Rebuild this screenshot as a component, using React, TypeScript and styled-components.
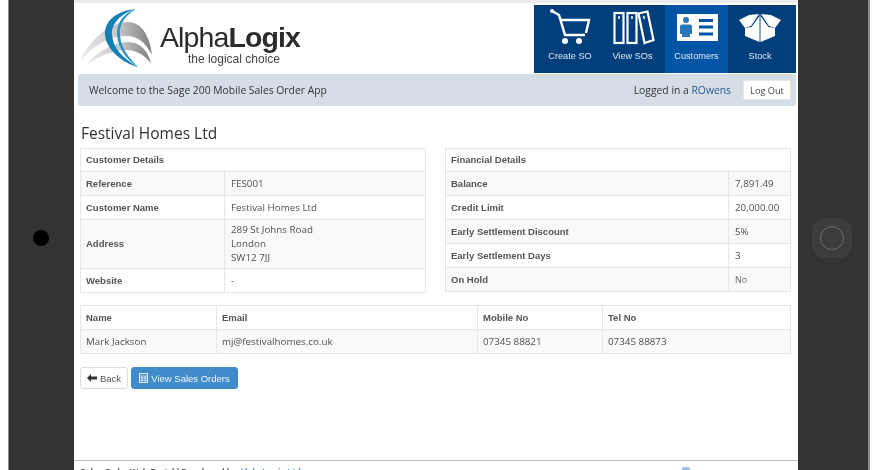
import styled, { createGlobalStyle } from 'styled-components';

const GlobalStyle = createGlobalStyle`
  html, body {
    margin: 0;
    padding: 0;
    background: #ffffff;
    overflow: hidden;
  }
`;

const Device = styled.div`
  display: flex;
  width: 876px;
  height: 470px;
  overflow: hidden;
  filter: blur(0.35px);
  font-family: 'Open Sans', 'Noto Sans', sans-serif;
  color: #444;
`;

const Bezel = styled.div<{ $side: 'left' | 'right' }>`
  box-sizing: border-box;
  display: flex;
  align-items: center;
  flex-shrink: 0;
  padding-top: 6px;
  background: #333333;
  ${({ $side }) =>
    $side === 'left'
      ? `width: 66px; margin-left: 8px; border-left: 1px solid #8c8c8c; padding-left: 24px;`
      : `width: 72px; border-right: 2px solid #8c8c8c; padding-left: 14px;`}
`;

const Camera = styled.span`
  width: 16px;
  height: 16px;
  border-radius: 50%;
  background: #000;
`;

const HomeButton = styled.span`
  display: flex;
  align-items: center;
  justify-content: center;
  width: 40px;
  height: 40px;
  border-radius: 13px;
  background: #3c3c3c;
`;

const HomeRing = styled.span`
  box-sizing: border-box;
  width: 24px;
  height: 24px;
  border-radius: 50%;
  border: 1.5px solid #6a6a6a;
`;

const Screen = styled.div`
  display: flex;
  flex-direction: column;
  width: 724px;
  flex-shrink: 0;
  background: #fff;
  border-top: 3px solid #ececec;
  box-sizing: border-box;
`;

const Header = styled.header`
  display: flex;
  justify-content: space-between;
  height: 69px;
  padding: 2px 2px 0 4px;
`;

const Brand = styled.div`
  display: flex;
  align-items: flex-start;
  gap: 6px;
`;

const BrandText = styled.div`
  display: flex;
  flex-direction: column;
  align-items: center;
  padding-top: 16px;
  font-family: 'Liberation Sans', Arial, sans-serif;
  color: #2c2c2c;
`;

const BrandName = styled.div`
  font-size: 28.5px;
  line-height: 32px;
  letter-spacing: -0.9px;

  b {
    font-weight: 700;
  }
`;

const Tagline = styled.div`
  font-size: 12px;
  line-height: 14px;
  margin: -1px 0 0 8px;
  color: #444;
`;

const Nav = styled.nav`
  display: flex;
  height: 68px;
  background: #013f7c;
`;

const NavItem = styled.div<{ $active?: boolean; $width: number; $pad?: string }>`
  display: flex;
  flex-direction: column;
  align-items: center;
  width: ${({ $width }) => $width}px;
  padding: 4px ${({ $pad }) => $pad || '0 0 0'};
  box-sizing: border-box;
  background: ${({ $active }) => ($active ? '#0255a5' : 'transparent')};
  font-family: 'Liberation Sans', Arial, sans-serif;
  font-size: 9.2px;
  color: #dce6f0;

  svg {
    display: block;
    height: 40px;
  }

  span {
    margin-top: 1px;
    line-height: 12px;
  }
`;

const WelcomeBar = styled.div`
  display: flex;
  align-items: center;
  justify-content: space-between;
  height: 32px;
  margin: 0 2px 0 4px;
  padding: 0 5px 0 11px;
  background: #d5dee6;
  border-radius: 3px;
  font-size: 10.35px;
  color: #333;
`;

const LoggedIn = styled.div`
  display: flex;
  align-items: center;
  gap: 12px;
`;

const UserLink = styled.span`
  color: #2a5a8c;
`;

const LogOut = styled.button`
  height: 20px;
  width: 48px;
  padding: 0;
  background: #fff;
  border: 1px solid #e8e8e8;
  border-radius: 2px;
  font-family: inherit;
  font-size: 9.2px;
  color: #444;
`;

const Content = styled.main`
  flex: 1;
  padding: 0 7px 0 6px;
`;

const Title = styled.h1`
  margin: 17px 0 5px 1px;
  font-size: 15.5px;
  line-height: 20px;
  font-weight: 400;
  color: #333;
`;

const TwoCols = styled.div`
  display: flex;
  align-items: flex-start;
  justify-content: space-between;
`;

const Table = styled.table<{ $width: number }>`
  width: ${({ $width }) => $width}px;
  table-layout: fixed;
  border-collapse: collapse;
  font-size: 9.8px;
  color: #505050;
`;

const Row = styled.tr<{ $striped?: boolean }>`
  background: ${({ $striped }) => ($striped ? '#f9f9f9' : '#fff')};
`;

const Cell = styled.td<{ $height?: number }>`
  height: ${({ $height }) => $height || 24}px;
  padding: 0 5px 0 6px;
  border: 1px solid #e6e6e6;
  box-sizing: border-box;
  line-height: 14px;
`;

const Label = styled(Cell).attrs({ as: 'th' })`
  padding-left: 5px;
  font-family: 'Liberation Sans', Arial, sans-serif;
  font-size: 9.5px;
  font-weight: 700;
  text-align: left;
  color: #555;
`;

const Small = styled.span`
  font-size: 9px;
  color: #666;
`;

const ContactTable = styled(Table)`
  margin-top: 12px;

  td {
    padding-left: 5px;
  }
`;

const Actions = styled.div`
  display: flex;
  gap: 3px;
  margin-top: 13px;
`;

const Button = styled.button<{ $primary?: boolean }>`
  display: flex;
  align-items: center;
  justify-content: center;
  gap: 3px;
  height: 22px;
  padding: 0;
  width: ${({ $primary }) => ($primary ? 107 : 48)}px;
  border-radius: 3px;
  border: 1px solid ${({ $primary }) => ($primary ? '#3f8acb' : '#dcdcdc')};
  background: ${({ $primary }) => ($primary ? '#428bca' : '#fff')};
  color: ${({ $primary }) => ($primary ? '#eef5fb' : '#555')};
  font-family: 'Liberation Sans', Arial, sans-serif;
  font-size: 9.5px;
`;

const Footer = styled.footer`
  flex-shrink: 0;
  display: flex;
  justify-content: space-between;
  height: 3px;
  padding: 6px 108px 0 6px;
  overflow: hidden;
  border-top: 1px solid #bdbdbd;
  font-family: 'Liberation Sans', Arial, sans-serif;
  font-size: 8.500px;
  line-height: 10px;
  font-weight: 700;
  color: #555;

  span span {
    color: #428bca;
  }
`;

const FooterMark = styled.i`
  width: 8px;
  height: 8px;
  background: #9cc4e4;
  border-radius: 2px;
`;

function Logo() {
  return (
    <svg width="76" height="66" viewBox="0 0 76 66">
      <defs>
        <linearGradient id="arc" x1="0" x2="1" y1="0" y2="0">
          <stop offset="0" stopColor="#ececec" />
          <stop offset="0.55" stopColor="#c4c4c4" />
          <stop offset="1" stopColor="#7d7d7d" />
        </linearGradient>
      </defs>
      <path d="M2 56C12 34 32 17 50 17C64 17 72 32 74 50C68 38 60 31 48 31C30 31 14 42 2 56Z" fill="url(#arc)" />
      <path d="M8 60C20 46 36 37 50 37C62 37 70 46 73 58C66 50 58 45 48 45C34 45 20 52 8 60Z" fill="url(#arc)" />
      <path d="M58 4C36 6 26 18 27 30C28 44 44 58 60 62C46 54 35 44 34 30C33 18 44 8 58 4Z" fill="#1280b4" />
      <path d="M58 4C46 8 38 18 39 30C40 44 50 56 60 62C52 54 43 44 42 30C41 18 48 10 58 4Z" fill="#2b93c2" />
    </svg>
  );
}

function CartIcon() {
  return (
    <svg width="44" height="40" viewBox="0 0 44 40" fill="none" stroke="#fff">
      <path d="M4 2L11 6L17 26H37" strokeWidth="2.4" />
      <path d="M13 11H41L38 24" strokeWidth="2.4" />
      <circle cx="4" cy="2" r="2" fill="#fff" stroke="none" />
      <circle cx="17" cy="32" r="3" fill="#fff" stroke="none" />
      <circle cx="31" cy="32" r="3" fill="#fff" stroke="none" />
    </svg>
  );
}

function BindersIcon() {
  return (
    <svg width="44" height="40" viewBox="0 0 44 40" fill="none" stroke="#fff" strokeWidth="2.200">
      <rect x="3.500" y="4" width="9" height="30" />
      <rect x="16.500" y="4" width="9" height="30" />
      <path d="M27.500 4.500L36.500 2.500L42.500 31L33.500 34Z" />
      <path d="M8 7V10M21 7V10M32.500 7L33.500 10" strokeWidth="1.500" />
    </svg>
  );
}

function CustomerIcon() {
  return (
    <svg width="44" height="40" viewBox="0 0 44 40">
      <rect x="2" y="5" width="41" height="27" fill="#fff" />
      <circle cx="11" cy="11" r="3" fill="#2b78b8" />
      <path d="M5 17Q5 15.500 7 15.500H15Q17 15.500 17 17V25H15V28H7V25H5Z" fill="#2b78b8" />
      <path d="M24 11.600H38M24 18H38M24 25H38" stroke="#0255a5" strokeWidth="3" />
    </svg>
  );
}

function BoxIcon() {
  return (
    <svg width="44" height="40" viewBox="0 0 44 40">
      <path d="M1 11L11 6L21 5L13 17L7 19Z" fill="#fff" />
      <path d="M43 11L33 6L23 5L31 17L37 19Z" fill="#fff" />
      <path d="M7 19L13.500 18L21.500 7V33L7 27Z" fill="#fff" />
      <path d="M37 19L30.500 18L22.500 7V33L37 27Z" fill="#fff" />
      <path d="M22 6V33" stroke="#8fb0d0" strokeWidth="1" />
    </svg>
  );
}

function BackArrow() {
  return (
    <svg width="10" height="8" viewBox="0 0 10 8">
      <path d="M0 4L4 0V2.500H10V5.500H4V8Z" fill="#333" />
    </svg>
  );
}

function CalcIcon() {
  return (
    <svg width="9" height="10" viewBox="0 0 9 10" fill="none" stroke="#e4eff8">
      <rect x="0.500" y="0.500" width="8" height="9" />
      <path d="M0.500 3H8.500M0.500 5H8.500M0.500 7.300H8.500M3 3V9.500M6 3V9.500" strokeWidth="0.800" />
    </svg>
  );
}

const customerRows = [
  { label: 'Reference', value: 'FES001' },
  { label: 'Customer Name', value: 'Festival Homes Ltd' },
];

const financialRows = [
  { label: 'Balance', value: '7,891.49' },
  { label: 'Credit Limit', value: '20,000.00' },
  { label: 'Early Settlement Discount', value: '5%' },
  { label: 'Early Settlement Days', value: '3' },
];

export default function App() {
  return (
    <Device>
      <GlobalStyle />
      <Bezel $side="left">
        <Camera />
      </Bezel>
      <Screen>
        <Header>
          <Brand>
            <Logo />
            <BrandText>
              <BrandName>
                Alpha<b>Logix</b>
              </BrandName>
              <Tagline>the logical choice</Tagline>
            </BrandText>
          </Brand>
          <Nav>
            <NavItem $width={66} $pad="0 0 6px">
              <CartIcon />
              <span>Create SO</span>
            </NavItem>
            <NavItem $width={65}>
              <BindersIcon />
              <span>View SOs</span>
            </NavItem>
            <NavItem $width={63} $active>
              <CustomerIcon />
              <span>Customers</span>
            </NavItem>
            <NavItem $width={68} $pad="4px 0 0">
              <BoxIcon />
              <span>Stock</span>
            </NavItem>
          </Nav>
        </Header>
        <WelcomeBar>
          <span>Welcome to the Sage 200 Mobile Sales Order App</span>
          <LoggedIn>
            <span>
              Logged in a <UserLink>ROwens</UserLink>
            </span>
            <LogOut type="button">Log Out</LogOut>
          </LoggedIn>
        </WelcomeBar>
        <Content>
          <Title>Festival Homes Ltd</Title>
          <TwoCols>
            <Table $width={346}>
              <colgroup>
                <col style={{ width: 144 }} />
                <col />
              </colgroup>
              <tbody>
                <Row>
                  <Label colSpan={2} $height={23}>Customer Details</Label>
                </Row>
                {customerRows.map((row, i) => (
                  <Row key={row.label} $striped={i === 0}>
                    <Label>{row.label}</Label>
                    <Cell>{row.value}</Cell>
                  </Row>
                ))}
                <Row $striped>
                  <Label $height={49}>Address</Label>
                  <Cell $height={49}>
                    289 St Johns Road
                    <br />
                    London
                    <br />
                    SW12 7JJ
                  </Cell>
                </Row>
                <Row>
                  <Label>Website</Label>
                  <Cell>-</Cell>
                </Row>
              </tbody>
            </Table>
            <Table $width={346}>
              <colgroup>
                <col style={{ width: 283 }} />
                <col />
              </colgroup>
              <tbody>
                <Row>
                  <Label colSpan={2} $height={23}>Financial Details</Label>
                </Row>
                {financialRows.map((row, i) => (
                  <Row key={row.label} $striped={i % 2 === 0}>
                    <Label>{row.label}</Label>
                    <Cell>{row.value}</Cell>
                  </Row>
                ))}
                <Row $striped>
                  <Label>On Hold</Label>
                  <Cell>
                    <Small>No</Small>
                  </Cell>
                </Row>
              </tbody>
            </Table>
          </TwoCols>
          <ContactTable $width={711}>
            <colgroup>
              <col style={{ width: 136 }} />
              <col style={{ width: 261 }} />
              <col style={{ width: 125 }} />
              <col />
            </colgroup>
            <tbody>
              <Row>
                <Label>Name</Label>
                <Label>Email</Label>
                <Label>Mobile No</Label>
                <Label>Tel No</Label>
              </Row>
              <Row $striped>
                <Cell>Mark Jackson</Cell>
                <Cell>mj@festivalhomes.co.uk</Cell>
                <Cell>07345 88821</Cell>
                <Cell>07345 88873</Cell>
              </Row>
            </tbody>
          </ContactTable>
          <Actions>
            <Button type="button">
              <BackArrow />
              Back
            </Button>
            <Button type="button" $primary>
              <CalcIcon />
              View Sales Orders
            </Button>
          </Actions>
        </Content>
        <Footer>
          <span>
            Sales Order Web Portal | Developed by <span>AlphaLogix Ltd</span>
          </span>
          <FooterMark />
        </Footer>
      </Screen>
      <Bezel $side="right">
        <HomeButton>
          <HomeRing />
        </HomeButton>
      </Bezel>
    </Device>
  );
}
